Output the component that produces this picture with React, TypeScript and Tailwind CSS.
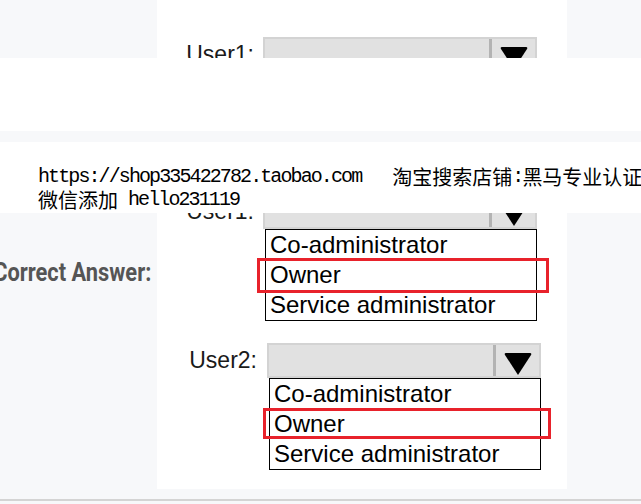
import React from "react";

const arial = { fontFamily: '"Liberation Sans", Arial, sans-serif' };

function Arrow() {
  return (
    <svg width="28" height="22" viewBox="0 0 28 22">
      <path d="M2 0 H26 Q28 0 27 2 L14 22 L1 2 Q0 0 2 0 Z" fill="#000" />
    </svg>
  );
}

function Header() {
  return (
    <div className="flex h-[35px] w-[274px] shrink-0 border-2 border-[#d3d3d3] bg-[#e1e1e1]">
      <div className="flex-1" />
      <div className="w-[3px] bg-[#b3b3b3]" />
      <div className="flex w-[43px] items-start justify-center pt-[8px]">
        <Arrow />
      </div>
    </div>
  );
}

function List({ box }: { box: "a" | "b" }) {
  const items = ["Co-administrator", "Owner", "Service administrator"];
  return (
    <div className="relative ml-[2px] h-[92px] w-[272px] border border-black bg-white" style={arial}>
      {items.map((t) => (
        <div key={t} className="h-[30px] whitespace-nowrap pl-[4px] text-[24px] leading-[30px] text-black">
          {t}
        </div>
      ))}
      {box === "a" ? (
        <div className="absolute left-[-9px] top-[28px] h-[35px] w-[292px] border-[3px] border-[#e8222b]" />
      ) : (
        <div className="absolute left-[-7px] top-[29px] h-[31px] w-[288px] border-[3px] border-[#e8222b]" />
      )}
    </div>
  );
}

function Row({ label, left, children }: { label: string; left: "a" | "b"; children?: React.ReactNode }) {
  return (
    <div className="flex">
      <div
        className={
          left === "a"
            ? "flex h-[35px] w-[106px] items-center justify-end pr-[9px]"
            : "flex h-[35px] w-[110px] items-center justify-end pr-[10px]"
        }
      >
        <span className="whitespace-nowrap text-[23px] leading-none text-[#1a1a1a]" style={arial}>
          {label}
        </span>
      </div>
      <div className="flex flex-col">
        <Header />
        {children}
      </div>
    </div>
  );
}

export default function App() {
  const mono = { fontFamily: '"Liberation Mono", "Courier New", monospace' };
  const cjk = { fontFamily: '"Noto Sans CJK SC", sans-serif' };
  return (
    <div className="flex h-[504px] w-full flex-col overflow-hidden bg-[#f7f8fa]">
      {/* top: question */}
      <div className="flex h-[58px] shrink-0">
        <div className="w-[157px] shrink-0" />
        <div className="w-[410px] shrink-0 overflow-hidden bg-white pt-[37px]">
          <Row label="User1:" left="a" />
        </div>
      </div>
      {/* white cover band */}
      <div className="h-[73px] shrink-0 bg-white" />
      <div className="h-[11px] shrink-0" />
      {/* watermark band */}
      <div className="h-[71px] shrink-0 overflow-hidden whitespace-nowrap bg-white pl-[38px] pt-[23px] text-black">
        <div className="flex h-[23px] items-center">
          <span className="text-[20px] tracking-[-1.9px]" style={mono}>
            https://shop335422782.taobao.com
          </span>
          <span className="ml-[31px] text-[20px]" style={cjk}>
            淘宝搜索店铺
          </span>
          <span className="text-[20px] tracking-[-1.9px]" style={mono}>
            :
          </span>
          <span className="text-[20px]" style={cjk}>
            黑马专业认证
          </span>
        </div>
        <div className="flex h-[23px] items-center">
          <span className="text-[20px]" style={cjk}>
            微信添加
          </span>
          <span className="ml-[10px] text-[20px] tracking-[-1.9px]" style={mono}>
            hello231119
          </span>
        </div>
      </div>
      {/* answer section */}
      <div className="flex h-[276px] shrink-0">
        <div className="flex w-[157px] shrink-0 justify-end pr-[6px] pt-[44px]">
          <span
            className="origin-right scale-x-[0.84] whitespace-nowrap text-[26px] font-bold leading-[30px] text-[#555]"
            style={{ fontFamily: "Roboto, sans-serif" }}
          >
            Correct Answer:
          </span>
        </div>
        <div className="w-[410px] shrink-0 overflow-hidden bg-white">
          <div className="-mt-[19px] flex flex-col gap-[22px]">
            <Row label="User1:" left="a">
              <List box="a" />
            </Row>
            <Row label="User2:" left="b">
              <List box="b" />
            </Row>
          </div>
        </div>
      </div>
      <div className="h-[10px] shrink-0" />
      <div className="h-[2px] shrink-0 bg-[#d4d4d4]" />
    </div>
  );
}
